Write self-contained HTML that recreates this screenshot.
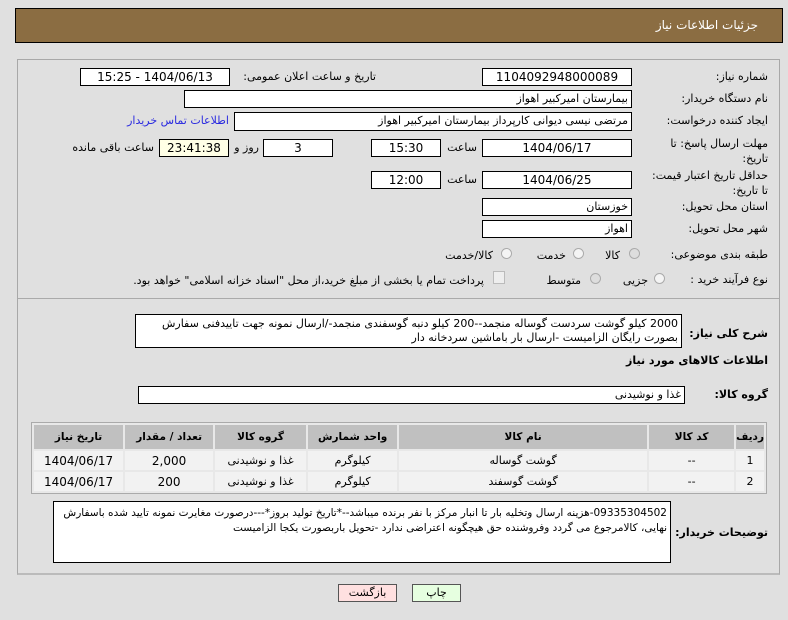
<!DOCTYPE html>
<html><head><meta charset="utf-8"><style>
body{margin:0;width:788px;height:620px;background:#e0e0e0;font-family:"DejaVu Sans","Liberation Sans",sans-serif;font-size:11px;color:#000;position:relative;overflow:hidden;direction:rtl}
.a{position:absolute;white-space:nowrap}
.b{position:absolute;background:#fff;border:1px solid #000;box-sizing:border-box;text-align:center;line-height:16px;font-size:12px}
.r{text-align:right;padding-right:3px;font-size:11px}
.l{position:absolute;white-space:nowrap;text-align:right}
.rad{position:absolute;width:11px;height:11px;border-radius:50%;border:1px solid #aaa;background:#f4f4f4;box-sizing:border-box}
table{position:absolute;left:31px;top:422px;width:736px;border-collapse:separate;border-spacing:2px;border:1px solid #aaa;background:#e8e8e8}
th{background:#c0c0c0;height:24px;font-weight:bold;font-size:10.5px;padding:0}
td{background:#f2f2f2;height:19px;text-align:center;padding:0;font-size:11px}
.n{font-size:12px}
</style></head><body>
<div class="a" style="left:15px;top:8px;width:768px;height:35px;background:#8b6d42;border:1px solid #000;box-sizing:border-box"></div>
<div class="a" style="right:30px;top:18px;color:#fff;font-size:12px">جزئیات اطلاعات نیاز</div>
<div class="a" style="left:17px;top:59px;width:763px;height:516px;border:1px solid #a8a8a8;border-bottom:2px solid #bbb;box-sizing:border-box"></div>
<div class="a" style="left:18px;top:298px;width:761px;height:1px;background:#aaa"></div>

<div class="l" style="right:20px;top:70px">شماره نیاز:</div>
<div class="b" style="left:482px;top:68px;width:150px;height:18px">1104092948000089</div>
<div class="l" style="right:412px;top:70px">تاریخ و ساعت اعلان عمومی:</div>
<div class="b" style="left:80px;top:68px;width:150px;height:18px">1404/06/13 - 15:25</div>

<div class="l" style="right:20px;top:92px">نام دستگاه خریدار:</div>
<div class="b r" style="left:184px;top:90px;width:448px;height:18px">بیمارستان امیرکبیر اهواز</div>

<div class="l" style="right:20px;top:114px">ایجاد کننده درخواست:</div>
<div class="b r" style="left:234px;top:112px;width:398px;height:19px">مرتضی نیسی دیوانی کارپرداز بیمارستان امیرکبیر اهواز</div>
<div class="l" style="right:559px;top:114px;color:#2a2ae0">اطلاعات تماس خریدار</div>

<div class="l" style="right:20px;top:136px;line-height:15px">مهلت ارسال پاسخ: تا<br>تاریخ:</div>
<div class="b" style="left:482px;top:139px;width:150px;height:18px">1404/06/17</div>
<div class="l" style="right:311px;top:141px">ساعت</div>
<div class="b" style="left:371px;top:139px;width:70px;height:18px">15:30</div>
<div class="b" style="left:263px;top:139px;width:70px;height:18px">3</div>
<div class="l" style="right:529px;top:141px">روز و</div>
<div class="b" style="left:159px;top:139px;width:70px;height:18px;background:#ffffe6">23:41:38</div>
<div class="l" style="right:634px;top:141px">ساعت باقی مانده</div>

<div class="l" style="right:20px;top:168px;line-height:15px">حداقل تاریخ اعتبار قیمت:<br>تا تاریخ:</div>
<div class="b" style="left:482px;top:171px;width:150px;height:18px">1404/06/25</div>
<div class="l" style="right:311px;top:173px">ساعت</div>
<div class="b" style="left:371px;top:171px;width:70px;height:18px">12:00</div>

<div class="l" style="right:20px;top:200px">استان محل تحویل:</div>
<div class="b r" style="left:482px;top:198px;width:150px;height:18px">خوزستان</div>
<div class="l" style="right:20px;top:222px">شهر محل تحویل:</div>
<div class="b r" style="left:482px;top:220px;width:150px;height:18px">اهواز</div>

<div class="l" style="right:20px;top:248px">طبقه بندی موضوعی:</div>
<div class="rad" style="left:629px;top:248px;background:#ddd"></div><div class="l" style="right:168px;top:249px">کالا</div>
<div class="rad" style="left:573px;top:248px"></div><div class="l" style="right:222px;top:249px">خدمت</div>
<div class="rad" style="left:501px;top:248px"></div><div class="l" style="right:295px;top:249px">کالا/خدمت</div>

<div class="l" style="right:20px;top:273px">نوع فرآیند خرید :</div>
<div class="rad" style="left:654px;top:273px"></div><div class="l" style="right:140px;top:274px">جزیی</div>
<div class="rad" style="left:590px;top:273px;background:#ddd"></div><div class="l" style="right:207px;top:274px">متوسط</div>
<div class="a" style="left:493px;top:271px;width:10px;height:11px;border:1px solid #bbb;background:#eee"></div>
<div class="l" style="right:304px;top:274px">پرداخت تمام یا بخشی از مبلغ خرید،از محل "اسناد خزانه اسلامی" خواهد بود.</div>

<div class="l" style="right:20px;top:327px;font-weight:bold">شرح کلی نیاز:</div>
<div class="b" style="left:135px;top:314px;width:547px;height:34px;text-align:right;padding:2px 3px 0;line-height:14px;white-space:normal;font-size:11px;overflow:hidden">2000 کیلو گوشت سردست گوساله منجمد--200 کیلو دنبه گوسفندی منجمد-/ارسال نمونه جهت تاییدفنی سفارش بصورت رایگان الزامیست -ارسال بار باماشین سردخانه دار</div>

<div class="l" style="right:20px;top:354px;font-weight:bold">اطلاعات کالاهای مورد نیاز</div>
<div class="l" style="right:20px;top:388px;font-weight:bold">گروه کالا:</div>
<div class="b r" style="left:138px;top:386px;width:547px;height:18px">غذا و نوشیدنی</div>

<table><tr><th style="width:26px">ردیف</th><th style="width:85px">کد کالا</th><th style="width:248px">نام کالا</th><th style="width:89px">واحد شمارش</th><th style="width:91px">گروه کالا</th><th style="width:88px">تعداد / مقدار</th><th>تاریخ نیاز</th></tr>
<tr><td>1</td><td>--</td><td>گوشت گوساله</td><td>کیلوگرم</td><td>غذا و نوشیدنی</td><td class="n">2,000</td><td class="n">1404/06/17</td></tr>
<tr><td>2</td><td>--</td><td>گوشت گوسفند</td><td>کیلوگرم</td><td>غذا و نوشیدنی</td><td class="n">200</td><td class="n">1404/06/17</td></tr></table>

<div class="l" style="right:20px;top:526px;font-weight:bold">توضیحات خریدار:</div>
<div class="b" style="left:53px;top:501px;width:618px;height:62px;text-align:right;padding:4px 3px 0;line-height:15px;white-space:normal;font-size:10.5px">09335304502-هزینه ارسال وتخلیه بار تا انبار مرکز با نفر برنده میباشد--*تاریخ تولید بروز*---درصورت مغایرت نمونه تایید شده باسفارش نهایی، کالامرجوع می گردد وفروشنده حق هیچگونه اعتراضی ندارد -تحویل باربصورت یکجا الزامیست</div>

<div class="b" style="left:338px;top:584px;width:59px;height:18px;background:#ffe0e0;border-color:#555;font-size:11px">بازگشت</div>
<div class="b" style="left:412px;top:584px;width:49px;height:18px;background:#e6ffe0;border-color:#555;font-size:11px">چاپ</div>
</body></html>
